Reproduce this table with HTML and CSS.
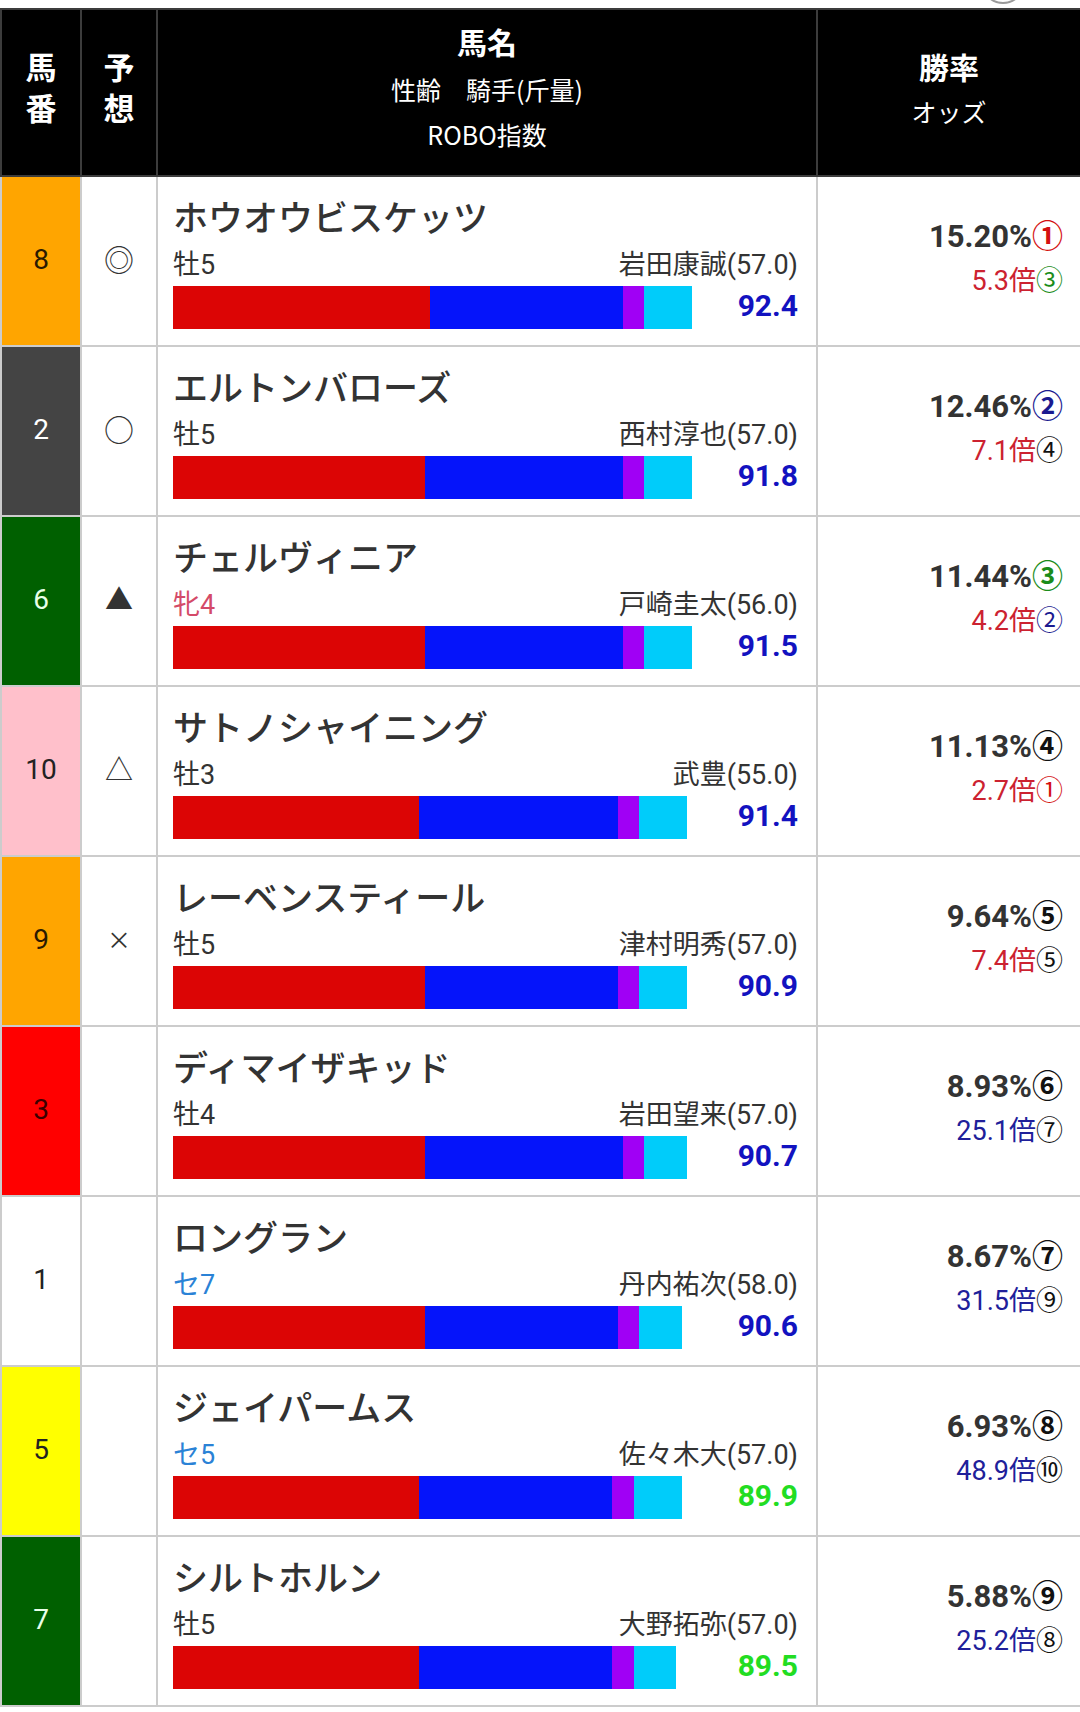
FILE: index.html
```html
<!DOCTYPE html>
<html lang="ja">
<head>
<meta charset="utf-8">
<title>ROBO指数</title>
<link rel="stylesheet" href="styles.css">
</head>
<body>
<div class="page">
<span class="float-btn"></span>
<table class="race">
  <colgroup>
    <col class="c-num"><col class="c-mark"><col class="c-info"><col class="c-odds">
  </colgroup>
  <thead>
    <tr>
      <th class="h-stack">馬<br>番</th>
      <th class="h-stack">予<br>想</th>
      <th class="h-info"><div class="h-main">馬名</div><div class="h-sub">性齢　騎手(斤量)</div><div class="h-sub">ROBO指数</div></th>
      <th class="h-odds"><div class="h-main2">勝率</div><div class="h-sub2">オッズ</div></th>
    </tr>
  </thead>
  <tbody>
    <tr>
      <td class="num w-orange">8</td>
      <td class="mark">◎</td>
      <td class="info">
        <div class="name">ホウオウビスケッツ</div>
        <div class="meta"><span class="sex male">牡5</span><span class="jockey">岩田康誠(57.0)</span></div>
        <div class="gauge"><div class="bar"><span class="seg s-red" style="width:257px"></span><span class="seg s-blue" style="width:193px"></span><span class="seg s-purple" style="width:21px"></span><span class="seg s-cyan" style="width:48px"></span></div><span class="score hi">92.4</span></div>
      </td>
      <td class="odds"><div class="pct">15.20%<span class="r1">①</span></div><div class="ods low">5.3倍<span class="r3">③</span></div></td>
    </tr>
    <tr>
      <td class="num w-gray">2</td>
      <td class="mark">○</td>
      <td class="info">
        <div class="name">エルトンバローズ</div>
        <div class="meta"><span class="sex male">牡5</span><span class="jockey">西村淳也(57.0)</span></div>
        <div class="gauge"><div class="bar"><span class="seg s-red" style="width:252px"></span><span class="seg s-blue" style="width:198px"></span><span class="seg s-purple" style="width:21px"></span><span class="seg s-cyan" style="width:48px"></span></div><span class="score hi">91.8</span></div>
      </td>
      <td class="odds"><div class="pct">12.46%<span class="r2">②</span></div><div class="ods low">7.1倍<span class="rn">④</span></div></td>
    </tr>
    <tr>
      <td class="num w-green">6</td>
      <td class="mark tri">▲</td>
      <td class="info">
        <div class="name">チェルヴィニア</div>
        <div class="meta"><span class="sex female">牝4</span><span class="jockey">戸崎圭太(56.0)</span></div>
        <div class="gauge"><div class="bar"><span class="seg s-red" style="width:252px"></span><span class="seg s-blue" style="width:198px"></span><span class="seg s-purple" style="width:21px"></span><span class="seg s-cyan" style="width:48px"></span></div><span class="score hi">91.5</span></div>
      </td>
      <td class="odds"><div class="pct">11.44%<span class="r3">③</span></div><div class="ods low">4.2倍<span class="r2">②</span></div></td>
    </tr>
    <tr>
      <td class="num w-pink">10</td>
      <td class="mark tri">△</td>
      <td class="info">
        <div class="name">サトノシャイニング</div>
        <div class="meta"><span class="sex male">牡3</span><span class="jockey">武豊(55.0)</span></div>
        <div class="gauge"><div class="bar"><span class="seg s-red" style="width:246px"></span><span class="seg s-blue" style="width:199px"></span><span class="seg s-purple" style="width:21px"></span><span class="seg s-cyan" style="width:48px"></span></div><span class="score hi">91.4</span></div>
      </td>
      <td class="odds"><div class="pct">11.13%<span class="rn">④</span></div><div class="ods low">2.7倍<span class="r1">①</span></div></td>
    </tr>
    <tr>
      <td class="num w-orange">9</td>
      <td class="mark cross">×</td>
      <td class="info">
        <div class="name">レーベンスティール</div>
        <div class="meta"><span class="sex male">牡5</span><span class="jockey">津村明秀(57.0)</span></div>
        <div class="gauge"><div class="bar"><span class="seg s-red" style="width:252px"></span><span class="seg s-blue" style="width:193px"></span><span class="seg s-purple" style="width:21px"></span><span class="seg s-cyan" style="width:48px"></span></div><span class="score hi">90.9</span></div>
      </td>
      <td class="odds"><div class="pct">9.64%<span class="rn">⑤</span></div><div class="ods low">7.4倍<span class="rn">⑤</span></div></td>
    </tr>
    <tr>
      <td class="num w-red">3</td>
      <td class="mark"></td>
      <td class="info">
        <div class="name">ディマイザキッド</div>
        <div class="meta"><span class="sex male">牡4</span><span class="jockey">岩田望来(57.0)</span></div>
        <div class="gauge"><div class="bar"><span class="seg s-red" style="width:252px"></span><span class="seg s-blue" style="width:198px"></span><span class="seg s-purple" style="width:21px"></span><span class="seg s-cyan" style="width:43px"></span></div><span class="score hi">90.7</span></div>
      </td>
      <td class="odds"><div class="pct">8.93%<span class="rn">⑥</span></div><div class="ods high">25.1倍<span class="rn">⑦</span></div></td>
    </tr>
    <tr>
      <td class="num w-white">1</td>
      <td class="mark"></td>
      <td class="info">
        <div class="name">ロングラン</div>
        <div class="meta"><span class="sex gelding">セ7</span><span class="jockey">丹内祐次(58.0)</span></div>
        <div class="gauge"><div class="bar"><span class="seg s-red" style="width:252px"></span><span class="seg s-blue" style="width:193px"></span><span class="seg s-purple" style="width:21px"></span><span class="seg s-cyan" style="width:43px"></span></div><span class="score hi">90.6</span></div>
      </td>
      <td class="odds"><div class="pct">8.67%<span class="rn">⑦</span></div><div class="ods high">31.5倍<span class="rn">⑨</span></div></td>
    </tr>
    <tr>
      <td class="num w-yellow">5</td>
      <td class="mark"></td>
      <td class="info">
        <div class="name">ジェイパームス</div>
        <div class="meta"><span class="sex gelding">セ5</span><span class="jockey">佐々木大(57.0)</span></div>
        <div class="gauge"><div class="bar"><span class="seg s-red" style="width:246px"></span><span class="seg s-blue" style="width:193px"></span><span class="seg s-purple" style="width:22px"></span><span class="seg s-cyan" style="width:48px"></span></div><span class="score lo">89.9</span></div>
      </td>
      <td class="odds"><div class="pct">6.93%<span class="rn">⑧</span></div><div class="ods high">48.9倍<span class="rn">⑩</span></div></td>
    </tr>
    <tr>
      <td class="num w-green">7</td>
      <td class="mark"></td>
      <td class="info">
        <div class="name">シルトホルン</div>
        <div class="meta"><span class="sex male">牡5</span><span class="jockey">大野拓弥(57.0)</span></div>
        <div class="gauge"><div class="bar"><span class="seg s-red" style="width:246px"></span><span class="seg s-blue" style="width:193px"></span><span class="seg s-purple" style="width:22px"></span><span class="seg s-cyan" style="width:42px"></span></div><span class="score lo">89.5</span></div>
      </td>
      <td class="odds"><div class="pct">5.88%<span class="rn">⑨</span></div><div class="ods high">25.2倍<span class="rn">⑧</span></div></td>
    </tr>
  </tbody>
</table>
</div>
</body>
</html>
```

FILE: styles.css
```css
html, body {
  margin: 0;
  padding: 0;
  background: #ffffff;
}

body {
  font-family: Roboto, "Noto Sans CJK JP", sans-serif;
  color: #333333;
}

.page {
  position: relative;
  padding-top: 8px;
  overflow: hidden;
}

/* bottom edge of a floating round button above the table */
.float-btn {
  position: absolute;
  left: 981px;
  top: -40px;
  width: 44px;
  height: 44px;
  border-radius: 50%;
  border: 2px solid #9a9a9a;
  background: #ffffff;
  box-sizing: border-box;
}

.race {
  width: 1080px;
  border-collapse: collapse;
  table-layout: fixed;
}

.c-num { width: 80px; }
.c-mark { width: 76px; }
.c-info { width: 660px; }
.c-odds { width: 264px; }

/* header */
.race thead tr {
  height: 167px;
}

.race th {
  background: #000000;
  color: #ffffff;
  border: 2px solid #3c3c3c;
  padding: 0;
  vertical-align: middle;
  font-family: "Noto Sans CJK JP", sans-serif;
  font-weight: normal;
}

.h-stack {
  font-size: 31px;
  font-weight: bold !important;
  line-height: 41px;
  padding-bottom: 14px !important;
}

.h-main {
  font-size: 30px;
  font-weight: bold;
  line-height: 44px;
  margin-bottom: 4px;
}

.h-sub {
  font-size: 25px;
  line-height: 45px;
}

.h-info {
  padding-bottom: 10px !important;
}

.h-main2 {
  font-size: 30px;
  font-weight: bold;
  line-height: 44px;
}

.h-sub2 {
  font-size: 25px;
  line-height: 46px;
}

.h-odds {
  padding-bottom: 7px !important;
}

/* body */
.race tbody tr {
  height: 170px;
}

.race td {
  border: 2px solid #cccccc;
  padding: 0;
}

.num {
  text-align: center;
  vertical-align: middle;
  font-size: 28px;
  color: #222222;
  padding-bottom: 3px !important;
}

.w-orange { background: #ffa500; color: #2a1a00; }
.w-gray { background: #444444; color: #ffffff; }
.w-green { background: #006000; color: #e8ffe8; }
.w-pink { background: #ffc0cb; color: #222222; }
.w-red { background: #ff0000; color: #3a0000; }
.w-white { background: #ffffff; color: #222222; }
.w-yellow { background: #ffff00; color: #222222; }

.mark {
  text-align: center;
  vertical-align: middle;
  font-family: "Noto Sans CJK JP", sans-serif;
  font-size: 30px;
  color: #333333;
  padding-bottom: 6px !important;
}

.mark.tri {
  font-size: 28px;
}

.mark.cross {
  font-size: 24px;
}

.info {
  vertical-align: top;
  padding: 20px 18px 0 15px !important;
}

.name {
  font-size: 35px;
  font-weight: 500;
  line-height: 46px;
  color: #333333;
  white-space: nowrap;
}

.meta {
  display: flex;
  justify-content: space-between;
  align-items: center;
  margin-top: 7px;
  font-size: 27px;
  line-height: 30px;
  color: #333333;
}

.sex.male { color: #333333; }
.sex.female { color: #d44a68; }
.sex.gelding { color: #2a82d6; }

.gauge {
  display: flex;
  justify-content: space-between;
  align-items: center;
  margin-top: 6px;
  height: 43px;
}

.bar {
  display: flex;
  height: 43px;
}

.seg {
  display: block;
  height: 43px;
}

.s-red { background: #dc0505; }
.s-blue { background: #0514fa; }
.s-purple { background: #a000f5; }
.s-cyan { background: #00ccfa; }

.score {
  font-size: 30px;
  font-weight: bold;
  line-height: 36px;
  margin-top: -4px;
}

.score.hi { color: #1212c0; }
.score.lo { color: #22dd22; }

.odds {
  vertical-align: middle;
  text-align: right;
  padding: 0 17px 4px 0 !important;
}

.pct {
  font-size: 31px;
  font-weight: bold;
  line-height: 44px;
  color: #333333;
}

.ods {
  font-size: 27px;
  line-height: 44px;
}

.ods.low { color: #cc2230; }
.ods.high { color: #20209a; }

.r1 { color: #d41010; }
.r2 { color: #1a1a90; }
.r3 { color: #1a8c1a; }
.rn { color: #111111; }
```
